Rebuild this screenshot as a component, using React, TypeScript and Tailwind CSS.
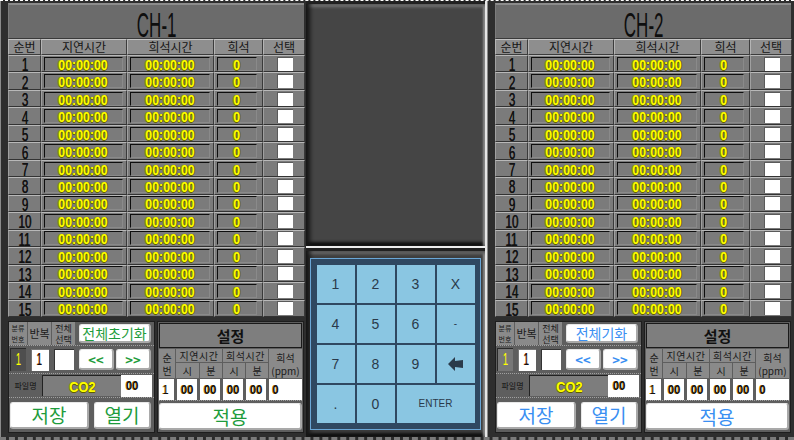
import React from "react";

const KR = "font-['Noto_Sans_CJK_KR','Noto_Sans',sans-serif]";
const LS = "font-['Liberation_Sans',Arial,sans-serif]";

const cols = "grid grid-cols-[33px_86px_87px_49px_42px]";
const hdrCell =
  "bg-[#8e8e8e] border-t border-l border-r border-b border-t-[#c4c4c4] border-l-[#b4b4b4] border-r-[#3c3c3c] border-b-[#3c3c3c] flex items-center justify-center text-[12px] text-[#161616] leading-none";
const rowCell =
  "bg-[#7b7b7b] border-t border-b border-l border-r border-t-[#b8b8b8] border-b-[#333] border-l-[#a0a0a0] border-r-[#3a3a3a] flex items-center min-h-0";
const yellow =
  "font-bold leading-none text-[#ffff00] inline-block [text-shadow:1px_0_0_#5e5e00,0_1px_0_#5e5e00,-1px_0_0_#8a8a20]";

function TimeBox({ w, text }: { w: string; text: string }) {
  return (
    <div
      className={`${w} h-[14px] ml-[2px] border-t border-l border-t-[#0e0e0e] border-l-[#0e0e0e] border-r border-b border-r-[#8a8a8a] border-b-[#8a8a8a] flex items-center justify-center`}
    >
      <span className={`${LS} ${yellow} text-[13px] scale-x-[0.95] scale-y-[1.16] mt-[1px]`}>{text}</span>
    </div>
  );
}

function Row({ n }: { n: number }) {
  return (
    <div className={`${cols} min-h-0`}>
      <div className={`${rowCell} justify-center`}>
        <span className={`${LS} text-[14px] leading-[14px] text-[#111] inline-block scale-x-[0.83] scale-y-[1.35] mt-[1px] [text-shadow:0.5px_0_0_#111]`}>{n}</span>
      </div>
      <div className={rowCell}>
        <TimeBox w="w-[79px]" text="00:00:00" />
      </div>
      <div className={rowCell}>
        <TimeBox w="w-[80px]" text="00:00:00" />
      </div>
      <div className={rowCell}>
        <TimeBox w="w-[40px]" text="0" />
      </div>
      <div className={`${rowCell} justify-center`}>
        <div className="w-[16px] h-[14px] bg-white border-t border-l border-[#5a5a5a] ml-[1px]" />
      </div>
    </div>
  );
}

function Btn({ className, children }: { className: string; children: React.ReactNode }) {
  return (
    <div
      className={`bg-white rounded-[3px] border-r-2 border-b-2 border-r-[#a9a9a9] border-b-[#a9a9a9] border-t border-l border-t-[#e8e8e8] border-l-[#e8e8e8] flex items-center justify-center ${KR} ${className}`}
    >
      {children}
    </div>
  );
}

function Channel({
  title,
  blue,
  resetLabel,
  right,
}: {
  title: string;
  blue: boolean;
  resetLabel: string;
  right?: boolean;
}) {
  const acc = blue ? "text-[#3a8ff2]" : "text-[#1e9c3c]";
  const labelCell = "bg-[#8a8a8a] flex flex-col items-center justify-center text-[#1a1a1a]";
  const sub = "bg-[#8a8a8a] flex items-center justify-center text-[10px] leading-none";
  return (
    <div
      className={`${right ? "w-[307px] pl-[7px] pr-[3px]" : "w-[306px] pl-[7px] pr-[2px]"} h-full bg-[#2e2e2e] ${KR} flex flex-col pt-[2px] border-l border-l-[#8a8a8a]`}
    >
      {/* title */}
      <div className="h-[36px] bg-[#6b6b6b] border-t-2 border-t-[#8c8c8c] border-l border-l-[#7c7c7c] border-b border-b-[#3a3a3a] flex items-center justify-center pt-[4px]">
        <span className={`${LS} text-[34px] leading-[30px] text-[#0e0e0e] inline-block scale-x-[0.5] scale-y-[1.05]`}>{title}</span>
      </div>
      {/* header */}
      <div className={`${cols} h-[16px]`}>
        <div className={hdrCell}>순번</div>
        <div className={hdrCell}>지연시간</div>
        <div className={hdrCell}>희석시간</div>
        <div className={hdrCell}>희석</div>
        <div className={hdrCell}>선택</div>
      </div>
      {/* rows */}
      <div className="h-[262px] grid grid-rows-[repeat(15,minmax(0,1fr))]">
        {Array.from({ length: 15 }, (_, i) => (
          <Row key={i} n={i + 1} />
        ))}
      </div>
      <div className="h-[4px]" />
      {/* bottom */}
      <div className="h-[112px] flex gap-[2px]">
        {/* left sub panel */}
        <div className="w-[147px] bg-[#5e5e5e] border border-[#1e1e1e] flex flex-col">
          {/* row A */}
          <div className="h-[24px] flex items-stretch border-b border-dotted border-b-[#a0a0a0]">
            <div className={`${labelCell} w-[18px] text-[7px] leading-[11px]`}>
              <span>분류</span>
              <span>번호</span>
            </div>
            <div className={`${labelCell} w-[23px] ml-px text-[11px] leading-none`}>반복</div>
            <div className={`${labelCell} w-[23px] ml-px text-[9px] leading-[11px]`}>
              <span>전체</span>
              <span>선택</span>
            </div>
            <div className="flex-1 flex items-center pl-[4px] pr-[3px]">
              <Btn className={`w-full h-[19px] text-[14px] leading-none ${acc}`}>{resetLabel}</Btn>
            </div>
          </div>
          {/* row B */}
          <div className="h-[28px] flex items-center border-b border-dotted border-b-[#a0a0a0]">
            <div className={`w-[16px] h-[23px] ml-[1px] ${right ? "bg-[#777]" : "bg-[#4e4e4e]"} border-t border-l border-[#2a2a2a] flex items-center justify-center`}>
              <span className={`${LS} text-[16px] leading-none text-[#ffff00] inline-block scale-x-[0.6]`}>1</span>
            </div>
            <div className="w-[18px] h-[22px] ml-[5px] bg-white border-t border-l border-[#777] flex items-center pl-[3px]">
              <span className={`${LS} text-[16px] leading-none text-[#111] inline-block scale-x-[0.6] [text-shadow:-1px_0_0_#b04000]`}>1</span>
            </div>
            <div className="w-[20px] h-[21px] ml-[5px] bg-white border-t border-l border-[#333]" />
            <div className="flex-1 flex items-center gap-[2px] pl-[5px] pr-[3px]">
              <Btn className={`flex-1 h-[21px] ${LS} font-bold text-[13px] leading-none ${acc}`}>&lt;&lt;</Btn>
              <Btn className={`flex-1 h-[21px] ${LS} font-bold text-[13px] leading-none ${acc}`}>&gt;&gt;</Btn>
            </div>
          </div>
          {/* row C */}
          <div className="h-[24px] flex items-center border-b border-dotted border-b-[#a0a0a0]">
            <div className="w-[33px] text-[8px] text-[#111] text-center leading-none">파일명</div>
            <div className="w-[79px] h-[21px] bg-[#7d7d7d] border-t border-l border-[#222] flex items-center justify-center">
              <span className={`${LS} ${yellow} text-[15px] scale-x-[0.85]`}>CO2</span>
            </div>
            <div className="w-[31px] h-[22px] bg-white flex items-center pl-[4px]">
              <span className={`${LS} font-bold text-[13px] leading-none text-[#111] inline-block scale-x-[0.85] [text-shadow:-1px_0_0_#c08000]`}>00</span>
            </div>
          </div>
          {/* row D */}
          <div className="flex-1 flex items-center gap-[5px] pl-[1px] pr-[3px]">
            <Btn className={`w-[79px] h-[27px] text-[19px] leading-none ${acc}`}>저장</Btn>
            <Btn className={`flex-1 h-[27px] text-[19px] leading-none ${acc}`}>열기</Btn>
          </div>
        </div>
        {/* right sub panel */}
        <div className="flex-1 bg-[#5e5e5e] border border-[#1e1e1e] flex flex-col px-[1px]">
          <div className="h-[25px] mt-[1px] bg-[#7e7e7e] border border-[#1a1a1a] flex items-center justify-center text-[15px] leading-none font-bold text-[#111]">설정</div>
          <div className="h-[29px] flex text-[#1a1a1a] mt-[1px] gap-[1px]">
            <div className="w-[16px] bg-[#8a8a8a] flex flex-col items-center justify-center text-[10px] leading-[13px]">
              <span>순</span>
              <span>번</span>
            </div>
            <div className="w-[46px] flex flex-col gap-[1px]">
              <div className={`h-[13px] ${sub} tracking-[0.5px]`}>지연시간</div>
              <div className="flex-1 flex gap-[1px]">
                <div className={`flex-1 ${sub}`}>시</div>
                <div className={`flex-1 ${sub}`}>분</div>
              </div>
            </div>
            <div className="w-[45px] flex flex-col gap-[1px]">
              <div className={`h-[13px] ${sub} tracking-[0.5px]`}>희석시간</div>
              <div className="flex-1 flex gap-[1px]">
                <div className={`flex-1 ${sub}`}>시</div>
                <div className={`flex-1 ${sub}`}>분</div>
              </div>
            </div>
            <div className="flex-1 bg-[#8a8a8a] flex flex-col items-center justify-center text-[10px] leading-[13px]">
              <span>희석</span>
              <span>(ppm)</span>
            </div>
          </div>
          <div className="h-[22px] flex items-center gap-[3px] mt-[1px] border-b border-dotted border-b-[#a0a0a0] pb-[1px]">
            {["1", "00", "00", "00", "00", "0"].map((t, i) => (
              <div
                key={i}
                className={`${i === 0 ? "w-[15px]" : i === 5 ? "flex-1" : "w-[20px]"} h-[21px] bg-white flex items-center ${i === 0 || i === 5 ? "pl-[3px]" : "justify-center"}`}
              >
                <span className={`${LS} ${i === 0 ? "" : "font-bold"} text-[13px] leading-none text-[#111] inline-block scale-x-[0.85] [text-shadow:-1px_0_0_#c08000]`}>{t}</span>
              </div>
            ))}
          </div>
          <div className="flex-1 flex items-center">
            <Btn className={`w-full h-[27px] text-[19px] leading-none ${acc}`}>적용</Btn>
          </div>
        </div>
      </div>
    </div>
  );
}

function Key({ children, wide }: { children: React.ReactNode; wide?: boolean }) {
  return (
    <div
      className={`${wide ? "col-span-2" : ""} bg-[#8ac6e2] flex items-center justify-center text-[#2a3a4a] ${LS} text-[14px] leading-none`}
    >
      {children}
    </div>
  );
}

function Middle() {
  return (
    <div className="w-[181px] h-full bg-[#202020] flex flex-col border-r-2 border-r-[#e6e6e6]">
      <div className="h-[3px]" />
      <div className="h-[243px] bg-[#454545] shadow-[inset_5px_0_4px_-1px_#161616,inset_0_4px_3px_-1px_#7a7a7a,inset_-3px_0_2px_-1px_#8c8c8c,inset_0_-5px_3px_-1px_#111]" />
      <div className="h-[2px] bg-[#ececec]" />
      <div className="h-[3px]" />
      <div className="h-[187px] bg-[#3e3e3e] shadow-[inset_5px_0_4px_-1px_#161616,inset_0_4px_3px_-1px_#6e6e6e,inset_-3px_0_2px_-1px_#8c8c8c,inset_0_-5px_3px_-1px_#111] flex items-center justify-center">
        <div className="w-[171px] h-[172px] bg-[#2f4861] border border-[#6aa6d6] flex items-center justify-center">
          <div className="w-[158px] h-[158px] grid grid-cols-4 grid-rows-4 gap-[2px]">
            <Key>1</Key>
            <Key>2</Key>
            <Key>3</Key>
            <Key>X</Key>
            <Key>4</Key>
            <Key>5</Key>
            <Key>6</Key>
            <Key>
              <span className="text-[10px]">-</span>
            </Key>
            <Key>7</Key>
            <Key>8</Key>
            <Key>9</Key>
            <Key>
              <svg width="15" height="14" viewBox="0 0 15 14">
                <path d="M0 7 L7 0 L7 4 L15 3 L15 11 L7 10 L7 14 Z" fill="#2a3a4a" />
              </svg>
            </Key>
            <Key>.</Key>
            <Key>0</Key>
            <Key wide>
              <span className="text-[10px]">ENTER</span>
            </Key>
          </div>
        </div>
      </div>
      <div className="flex-1" />
    </div>
  );
}

export default function App() {
  return (
    <div className="w-[794px] h-[440px] bg-[#2a2a2a] border-t border-dashed border-t-white flex overflow-hidden border-b-[3px] border-b-[#7a7a7a]">
      <Channel title="CH-1" blue={false} resetLabel="전체초기화" />
      <Middle />
      <Channel title="CH-2" blue={true} resetLabel="전체기화" right />
    </div>
  );
}
